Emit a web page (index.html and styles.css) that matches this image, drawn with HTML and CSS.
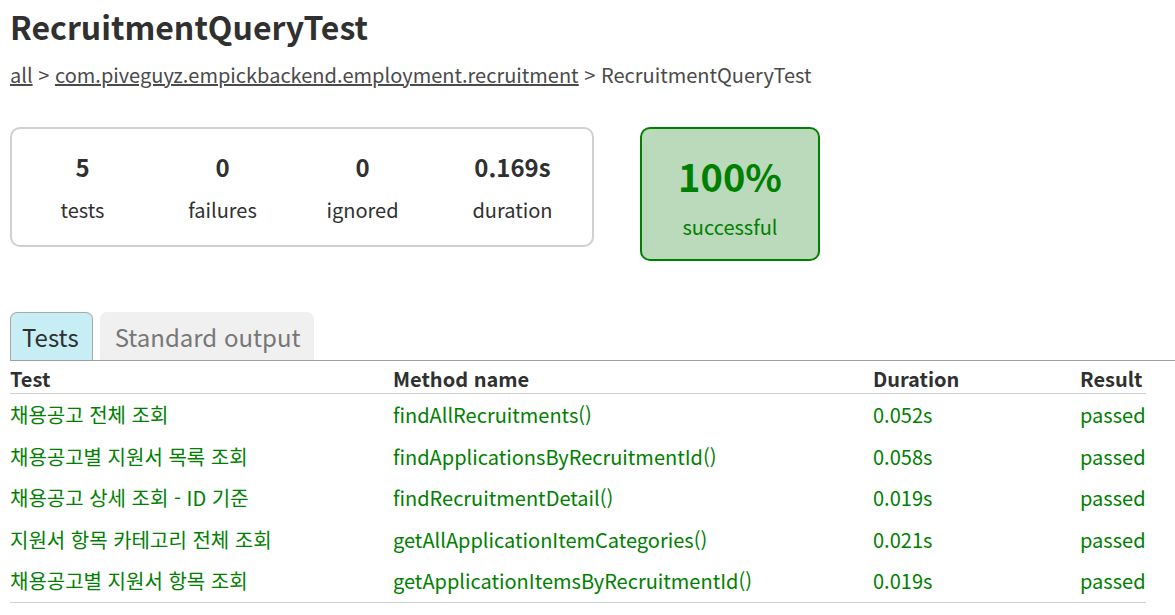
FILE: index.html
```html
<!DOCTYPE html>
<html lang="ko">
<head>
<meta charset="utf-8">
<title>Test results - RecruitmentQueryTest</title>
<link rel="stylesheet" href="styles.css">
</head>
<body>
<div class="content">
  <h1 class="title">RecruitmentQueryTest</h1>
  <div class="breadcrumbs">
    <a href="#">all</a> &gt; <a href="#">com.piveguyz.empickbackend.employment.recruitment</a> &gt; RecruitmentQueryTest
  </div>

  <div class="summary">
    <div class="summary-group">
      <div class="info-box">
        <div class="counter">5</div>
        <p class="label">tests</p>
      </div>
      <div class="info-box">
        <div class="counter">0</div>
        <p class="label">failures</p>
      </div>
      <div class="info-box">
        <div class="counter">0</div>
        <p class="label">ignored</p>
      </div>
      <div class="info-box">
        <div class="counter">0.169s</div>
        <p class="label">duration</p>
      </div>
    </div>
    <div class="success-rate">
      <div class="percent">100%</div>
      <p class="label">successful</p>
    </div>
  </div>

  <ul class="tab-links">
    <li class="tab selected">Tests</li>
    <li class="tab">Standard output</li>
  </ul>

  <table class="tests">
    <colgroup>
      <col class="col-test">
      <col class="col-method">
      <col class="col-duration">
      <col class="col-result">
    </colgroup>
    <thead>
      <tr>
        <th>Test</th>
        <th>Method name</th>
        <th>Duration</th>
        <th>Result</th>
      </tr>
    </thead>
    <tbody>
      <tr class="success">
        <td>채용공고 전체 조회</td>
        <td>findAllRecruitments()</td>
        <td>0.052s</td>
        <td>passed</td>
      </tr>
      <tr class="success">
        <td>채용공고별 지원서 목록 조회</td>
        <td>findApplicationsByRecruitmentId()</td>
        <td>0.058s</td>
        <td>passed</td>
      </tr>
      <tr class="success">
        <td>채용공고 상세 조회 - ID 기준</td>
        <td>findRecruitmentDetail()</td>
        <td>0.019s</td>
        <td>passed</td>
      </tr>
      <tr class="success">
        <td>지원서 항목 카테고리 전체 조회</td>
        <td>getAllApplicationItemCategories()</td>
        <td>0.021s</td>
        <td>passed</td>
      </tr>
      <tr class="success">
        <td>채용공고별 지원서 항목 조회</td>
        <td>getApplicationItemsByRecruitmentId()</td>
        <td>0.019s</td>
        <td>passed</td>
      </tr>
    </tbody>
  </table>
</div>
</body>
</html>
```

FILE: styles.css
```css
html, body {
  margin: 0;
  padding: 0;
  background: #ffffff;
}

body {
  font-family: "Noto Sans CJK KR", "Noto Sans", sans-serif;
  font-size: 20px;
  line-height: 29px;
  color: #303030;
}

.content {
  padding: 3px 0 0 10px;
}

.title {
  margin: 0 0 11px 0;
  font-size: 32px;
  line-height: 46px;
  font-weight: 700;
  color: #303030;
  white-space: nowrap;
}

.breadcrumbs {
  color: #4a4a4a;
  white-space: nowrap;
}

.breadcrumbs a {
  color: #4a4a4a;
  text-decoration: underline;
}

.summary {
  display: flex;
  align-items: flex-start;
  margin-top: 38px;
}

.summary-group {
  display: grid;
  grid-template-columns: 141px 139px 141px 159px;
  border: 2px solid #d0d0d0;
  border-radius: 10px;
}

.info-box {
  text-align: center;
  padding: 20px 0 21px;
}

.counter {
  font-size: 24px;
  line-height: 35px;
  font-weight: 700;
  margin-bottom: 11px;
}

.label {
  margin: 0;
}

.success-rate {
  margin-left: 46px;
  width: 176px;
  box-sizing: content-box;
  text-align: center;
  padding: 21px 0 18px;
  border: 2px solid #008000;
  border-radius: 10px;
  background: #bbd9bb;
  color: #008000;
}

.percent {
  font-size: 38px;
  line-height: 52px;
  font-weight: 700;
  margin-bottom: 10px;
}

.tab-links {
  list-style: none;
  margin: 51px 0 0 0;
  padding: 0;
  display: flex;
  gap: 7px;
  border-bottom: 1px solid #a0a0a0;
}

.tab {
  font-size: 24px;
  line-height: 38px;
  padding: 5px 12px 4px 14px;
  border: 1px solid #f0f0f0;
  border-bottom: none;
  border-radius: 7px 7px 0 0;
  background: #f0f0f0;
  color: #777777;
}

.tab.selected {
  padding: 5px 13px 4px 11px;
  background: #c6eef4;
  border-color: #a8a8a8;
  color: #303030;
}

.tests {
  border-collapse: collapse;
  table-layout: fixed;
  width: 1136px;
  border-bottom: 1px solid #d0d0d0;
}

.col-test { width: 383px; }
.col-method { width: 480px; }
.col-duration { width: 207px; }
.col-result { width: 66px; }

.tests th {
  text-align: left;
  white-space: nowrap;
  font-weight: 700;
  padding: 3px 0 0 0;
  border-bottom: 1px solid #d0d0d0;
}

.tests td {
  white-space: nowrap;
  padding: 6px 0 6.5px 0;
}

.tests tr.success td {
  color: #008000;
}
```
